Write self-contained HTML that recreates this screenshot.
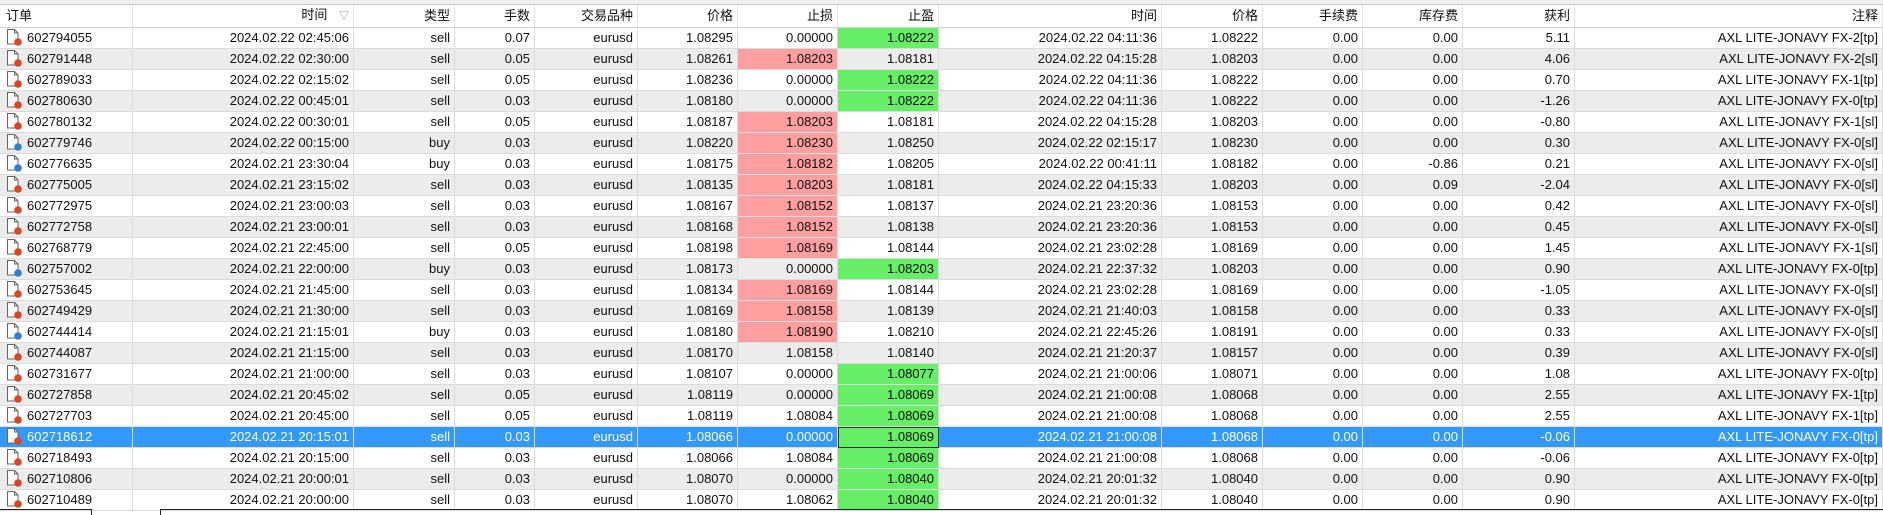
<!DOCTYPE html>
<html><head><meta charset="utf-8"><style>
body{margin:0;width:1883px;height:514px;overflow:hidden;background:#fff;font-family:"Liberation Sans","Noto Sans CJK SC",sans-serif;font-size:13px;color:#111;position:relative}
.top{position:absolute;left:0;top:0;width:1883px;height:4px;background:#f0f0f0;border-bottom:1px solid #c8c8c8}
table{position:absolute;left:0;top:5px;border-collapse:separate;border-spacing:0;table-layout:fixed;width:1883px}
td,th{height:21px;padding:0 4px;border-right:1px solid #dcdcdc;border-bottom:1px solid #dcdcdc;text-align:right;white-space:nowrap;overflow:hidden;font-weight:normal;box-sizing:border-box;line-height:20px}
th{border-right:1px solid #e4e4e4;border-bottom:1px solid #d0d0d0}
th:first-child,td:first-child{text-align:left;padding-left:6px}
tbody tr:nth-child(even) td{background:#ececec}
tr.s td{background:#3399ff!important;color:#fff}
td.r{background:#ff9f9f!important}
td.g{background:#66ee66!important}
tr.s td.g{background:#66ee66!important;outline:1px solid #333;outline-offset:-1px;color:#111}
.i{display:inline-block;vertical-align:-4px;margin-right:4px}
.bt{position:absolute;top:509px;height:5px;border-top:1px solid #222}
</style></head><body>
<div class="top"></div>
<svg width="0" height="0" style="position:absolute"><defs>
<g id="d"><path d="M1.5 .5h7l3.5 3.5v11h-10.5z" fill="#fff" stroke="#666"/><path d="M8.5 .5v3.5h3.5" fill="none" stroke="#666"/></g>
</defs></svg>
<table>
<colgroup><col style="width:133px"><col style="width:221px"><col style="width:101px"><col style="width:80px"><col style="width:103px"><col style="width:100px"><col style="width:100px"><col style="width:101px"><col style="width:223px"><col style="width:101px"><col style="width:100px"><col style="width:100px"><col style="width:112px"><col style="width:308px"></colgroup>
<thead><tr><th>订单</th><th>时间 <span style="color:#888;font-size:10px;margin-left:8px">▽</span></th><th>类型</th><th>手数</th><th>交易品种</th><th>价格</th><th>止损</th><th>止盈</th><th>时间</th><th>价格</th><th>手续费</th><th>库存费</th><th>获利</th><th>注释</th></tr></thead>
<tbody>
<tr><td><svg class="i" width="17" height="17"><use href="#d"/><circle cx="12" cy="13" r="3.8" fill="#e0441a"/></svg>602794055</td><td>2024.02.22 02:45:06</td><td>sell</td><td>0.07</td><td>eurusd</td><td>1.08295</td><td>0.00000</td><td class="g">1.08222</td><td>2024.02.22 04:11:36</td><td>1.08222</td><td>0.00</td><td>0.00</td><td>5.11</td><td>AXL LITE-JONAVY FX-2[tp]</td></tr>
<tr><td><svg class="i" width="17" height="17"><use href="#d"/><circle cx="12" cy="13" r="3.8" fill="#e0441a"/></svg>602791448</td><td>2024.02.22 02:30:00</td><td>sell</td><td>0.05</td><td>eurusd</td><td>1.08261</td><td class="r">1.08203</td><td>1.08181</td><td>2024.02.22 04:15:28</td><td>1.08203</td><td>0.00</td><td>0.00</td><td>4.06</td><td>AXL LITE-JONAVY FX-2[sl]</td></tr>
<tr><td><svg class="i" width="17" height="17"><use href="#d"/><circle cx="12" cy="13" r="3.8" fill="#e0441a"/></svg>602789033</td><td>2024.02.22 02:15:02</td><td>sell</td><td>0.05</td><td>eurusd</td><td>1.08236</td><td>0.00000</td><td class="g">1.08222</td><td>2024.02.22 04:11:36</td><td>1.08222</td><td>0.00</td><td>0.00</td><td>0.70</td><td>AXL LITE-JONAVY FX-1[tp]</td></tr>
<tr><td><svg class="i" width="17" height="17"><use href="#d"/><circle cx="12" cy="13" r="3.8" fill="#e0441a"/></svg>602780630</td><td>2024.02.22 00:45:01</td><td>sell</td><td>0.03</td><td>eurusd</td><td>1.08180</td><td>0.00000</td><td class="g">1.08222</td><td>2024.02.22 04:11:36</td><td>1.08222</td><td>0.00</td><td>0.00</td><td>-1.26</td><td>AXL LITE-JONAVY FX-0[tp]</td></tr>
<tr><td><svg class="i" width="17" height="17"><use href="#d"/><circle cx="12" cy="13" r="3.8" fill="#e0441a"/></svg>602780132</td><td>2024.02.22 00:30:01</td><td>sell</td><td>0.05</td><td>eurusd</td><td>1.08187</td><td class="r">1.08203</td><td>1.08181</td><td>2024.02.22 04:15:28</td><td>1.08203</td><td>0.00</td><td>0.00</td><td>-0.80</td><td>AXL LITE-JONAVY FX-1[sl]</td></tr>
<tr><td><svg class="i" width="17" height="17"><use href="#d"/><circle cx="12" cy="13" r="3.8" fill="#2a7fd8"/></svg>602779746</td><td>2024.02.22 00:15:00</td><td>buy</td><td>0.03</td><td>eurusd</td><td>1.08220</td><td class="r">1.08230</td><td>1.08250</td><td>2024.02.22 02:15:17</td><td>1.08230</td><td>0.00</td><td>0.00</td><td>0.30</td><td>AXL LITE-JONAVY FX-0[sl]</td></tr>
<tr><td><svg class="i" width="17" height="17"><use href="#d"/><circle cx="12" cy="13" r="3.8" fill="#2a7fd8"/></svg>602776635</td><td>2024.02.21 23:30:04</td><td>buy</td><td>0.03</td><td>eurusd</td><td>1.08175</td><td class="r">1.08182</td><td>1.08205</td><td>2024.02.22 00:41:11</td><td>1.08182</td><td>0.00</td><td>-0.86</td><td>0.21</td><td>AXL LITE-JONAVY FX-0[sl]</td></tr>
<tr><td><svg class="i" width="17" height="17"><use href="#d"/><circle cx="12" cy="13" r="3.8" fill="#e0441a"/></svg>602775005</td><td>2024.02.21 23:15:02</td><td>sell</td><td>0.03</td><td>eurusd</td><td>1.08135</td><td class="r">1.08203</td><td>1.08181</td><td>2024.02.22 04:15:33</td><td>1.08203</td><td>0.00</td><td>0.09</td><td>-2.04</td><td>AXL LITE-JONAVY FX-0[sl]</td></tr>
<tr><td><svg class="i" width="17" height="17"><use href="#d"/><circle cx="12" cy="13" r="3.8" fill="#e0441a"/></svg>602772975</td><td>2024.02.21 23:00:03</td><td>sell</td><td>0.03</td><td>eurusd</td><td>1.08167</td><td class="r">1.08152</td><td>1.08137</td><td>2024.02.21 23:20:36</td><td>1.08153</td><td>0.00</td><td>0.00</td><td>0.42</td><td>AXL LITE-JONAVY FX-0[sl]</td></tr>
<tr><td><svg class="i" width="17" height="17"><use href="#d"/><circle cx="12" cy="13" r="3.8" fill="#e0441a"/></svg>602772758</td><td>2024.02.21 23:00:01</td><td>sell</td><td>0.03</td><td>eurusd</td><td>1.08168</td><td class="r">1.08152</td><td>1.08138</td><td>2024.02.21 23:20:36</td><td>1.08153</td><td>0.00</td><td>0.00</td><td>0.45</td><td>AXL LITE-JONAVY FX-0[sl]</td></tr>
<tr><td><svg class="i" width="17" height="17"><use href="#d"/><circle cx="12" cy="13" r="3.8" fill="#e0441a"/></svg>602768779</td><td>2024.02.21 22:45:00</td><td>sell</td><td>0.05</td><td>eurusd</td><td>1.08198</td><td class="r">1.08169</td><td>1.08144</td><td>2024.02.21 23:02:28</td><td>1.08169</td><td>0.00</td><td>0.00</td><td>1.45</td><td>AXL LITE-JONAVY FX-1[sl]</td></tr>
<tr><td><svg class="i" width="17" height="17"><use href="#d"/><circle cx="12" cy="13" r="3.8" fill="#2a7fd8"/></svg>602757002</td><td>2024.02.21 22:00:00</td><td>buy</td><td>0.03</td><td>eurusd</td><td>1.08173</td><td>0.00000</td><td class="g">1.08203</td><td>2024.02.21 22:37:32</td><td>1.08203</td><td>0.00</td><td>0.00</td><td>0.90</td><td>AXL LITE-JONAVY FX-0[tp]</td></tr>
<tr><td><svg class="i" width="17" height="17"><use href="#d"/><circle cx="12" cy="13" r="3.8" fill="#e0441a"/></svg>602753645</td><td>2024.02.21 21:45:00</td><td>sell</td><td>0.03</td><td>eurusd</td><td>1.08134</td><td class="r">1.08169</td><td>1.08144</td><td>2024.02.21 23:02:28</td><td>1.08169</td><td>0.00</td><td>0.00</td><td>-1.05</td><td>AXL LITE-JONAVY FX-0[sl]</td></tr>
<tr><td><svg class="i" width="17" height="17"><use href="#d"/><circle cx="12" cy="13" r="3.8" fill="#e0441a"/></svg>602749429</td><td>2024.02.21 21:30:00</td><td>sell</td><td>0.03</td><td>eurusd</td><td>1.08169</td><td class="r">1.08158</td><td>1.08139</td><td>2024.02.21 21:40:03</td><td>1.08158</td><td>0.00</td><td>0.00</td><td>0.33</td><td>AXL LITE-JONAVY FX-0[sl]</td></tr>
<tr><td><svg class="i" width="17" height="17"><use href="#d"/><circle cx="12" cy="13" r="3.8" fill="#2a7fd8"/></svg>602744414</td><td>2024.02.21 21:15:01</td><td>buy</td><td>0.03</td><td>eurusd</td><td>1.08180</td><td class="r">1.08190</td><td>1.08210</td><td>2024.02.21 22:45:26</td><td>1.08191</td><td>0.00</td><td>0.00</td><td>0.33</td><td>AXL LITE-JONAVY FX-0[sl]</td></tr>
<tr><td><svg class="i" width="17" height="17"><use href="#d"/><circle cx="12" cy="13" r="3.8" fill="#e0441a"/></svg>602744087</td><td>2024.02.21 21:15:00</td><td>sell</td><td>0.03</td><td>eurusd</td><td>1.08170</td><td>1.08158</td><td>1.08140</td><td>2024.02.21 21:20:37</td><td>1.08157</td><td>0.00</td><td>0.00</td><td>0.39</td><td>AXL LITE-JONAVY FX-0[sl]</td></tr>
<tr><td><svg class="i" width="17" height="17"><use href="#d"/><circle cx="12" cy="13" r="3.8" fill="#e0441a"/></svg>602731677</td><td>2024.02.21 21:00:00</td><td>sell</td><td>0.03</td><td>eurusd</td><td>1.08107</td><td>0.00000</td><td class="g">1.08077</td><td>2024.02.21 21:00:06</td><td>1.08071</td><td>0.00</td><td>0.00</td><td>1.08</td><td>AXL LITE-JONAVY FX-0[tp]</td></tr>
<tr><td><svg class="i" width="17" height="17"><use href="#d"/><circle cx="12" cy="13" r="3.8" fill="#e0441a"/></svg>602727858</td><td>2024.02.21 20:45:02</td><td>sell</td><td>0.05</td><td>eurusd</td><td>1.08119</td><td>0.00000</td><td class="g">1.08069</td><td>2024.02.21 21:00:08</td><td>1.08068</td><td>0.00</td><td>0.00</td><td>2.55</td><td>AXL LITE-JONAVY FX-1[tp]</td></tr>
<tr><td><svg class="i" width="17" height="17"><use href="#d"/><circle cx="12" cy="13" r="3.8" fill="#e0441a"/></svg>602727703</td><td>2024.02.21 20:45:00</td><td>sell</td><td>0.05</td><td>eurusd</td><td>1.08119</td><td>1.08084</td><td class="g">1.08069</td><td>2024.02.21 21:00:08</td><td>1.08068</td><td>0.00</td><td>0.00</td><td>2.55</td><td>AXL LITE-JONAVY FX-1[tp]</td></tr>
<tr class="s"><td><svg class="i" width="17" height="17"><use href="#d"/><circle cx="12" cy="13" r="3.8" fill="#e0441a"/></svg>602718612</td><td>2024.02.21 20:15:01</td><td>sell</td><td>0.03</td><td>eurusd</td><td>1.08066</td><td>0.00000</td><td class="g">1.08069</td><td>2024.02.21 21:00:08</td><td>1.08068</td><td>0.00</td><td>0.00</td><td>-0.06</td><td>AXL LITE-JONAVY FX-0[tp]</td></tr>
<tr><td><svg class="i" width="17" height="17"><use href="#d"/><circle cx="12" cy="13" r="3.8" fill="#e0441a"/></svg>602718493</td><td>2024.02.21 20:15:00</td><td>sell</td><td>0.03</td><td>eurusd</td><td>1.08066</td><td>1.08084</td><td class="g">1.08069</td><td>2024.02.21 21:00:08</td><td>1.08068</td><td>0.00</td><td>0.00</td><td>-0.06</td><td>AXL LITE-JONAVY FX-0[tp]</td></tr>
<tr><td><svg class="i" width="17" height="17"><use href="#d"/><circle cx="12" cy="13" r="3.8" fill="#e0441a"/></svg>602710806</td><td>2024.02.21 20:00:01</td><td>sell</td><td>0.03</td><td>eurusd</td><td>1.08070</td><td>0.00000</td><td class="g">1.08040</td><td>2024.02.21 20:01:32</td><td>1.08040</td><td>0.00</td><td>0.00</td><td>0.90</td><td>AXL LITE-JONAVY FX-0[tp]</td></tr>
<tr><td><svg class="i" width="17" height="17"><use href="#d"/><circle cx="12" cy="13" r="3.8" fill="#e0441a"/></svg>602710489</td><td>2024.02.21 20:00:00</td><td>sell</td><td>0.03</td><td>eurusd</td><td>1.08070</td><td>1.08062</td><td class="g">1.08040</td><td>2024.02.21 20:01:32</td><td>1.08040</td><td>0.00</td><td>0.00</td><td>0.90</td><td>AXL LITE-JONAVY FX-0[tp]</td></tr>
</tbody></table>
<div class="bt" style="left:0;width:91px;border-right:1px solid #222"></div>
<div class="bt" style="left:160px;width:1723px;border-left:1px solid #222"></div>
</body></html>
